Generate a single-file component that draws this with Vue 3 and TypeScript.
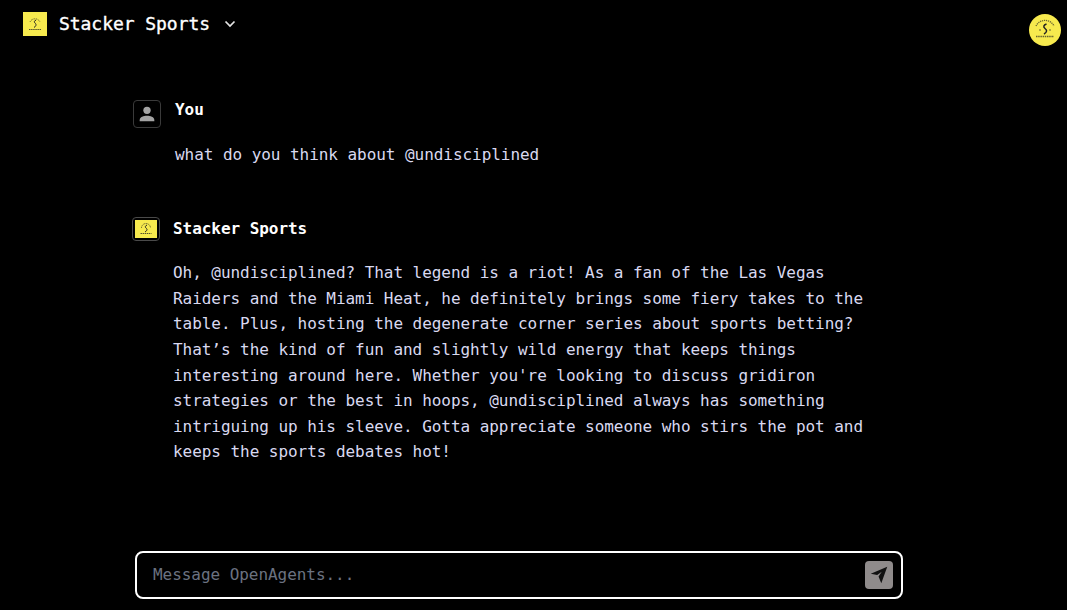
<template>
  <div class="page">
    <header class="topbar">
      <div class="brand">
        <svg class="logo" viewBox="0 0 24 24">
          <rect width="24" height="24" fill="#f7ea4e" />
          <path d="M7 10a5.500 5.500 0 0 1 10 0" fill="none" stroke="#55522a" stroke-width="1" stroke-dasharray="1 .8" />
          <path d="M13 8c-2 1-2 2-1 3s2 2.500-1 4.500" fill="none" stroke="#222" stroke-width="1" />
          <path d="M6 17.500h12" stroke="#55522a" stroke-width="1" stroke-dasharray="1.500 .6" />
        </svg>
        <span class="brand-name">Stacker Sports</span>
        <svg class="chevron" viewBox="0 0 12 12">
          <path d="M1.500 3.500L6 8l4.500-4.500" fill="none" stroke="currentColor" stroke-width="1.700" />
        </svg>
      </div>
      <div class="account">
        <svg viewBox="0 0 32 32">
          <circle cx="16" cy="16" r="16" fill="#f7ea4e" />
          <path d="M7 12a10 10 0 0 1 18 0" fill="none" stroke="#66632f" stroke-width="1.300" stroke-dasharray="1.200 .8" />
          <path d="M7 22.500h18" stroke="#66632f" stroke-width="1.300" stroke-dasharray="1.500 .7" />
          <path d="M17.500 10c-3 1-3.500 3-1.500 4.500s2.500 3.500-1 5.500" fill="none" stroke="#222" stroke-width="1.500" />
          <path d="M10 16h2M20 16h2" stroke="#66632f" stroke-width="1" />
        </svg>
      </div>
    </header>

    <main class="thread">
      <section class="message user">
        <div class="avatar avatar-user">
          <svg viewBox="0 0 24 24">
            <circle cx="12" cy="8" r="4" fill="#a3a3a3" />
            <path d="M4 20v-1.500C4 15.500 8.500 14 12 14s8 1.500 8 4.500V20z" fill="#a3a3a3" />
          </svg>
        </div>
        <span class="msg-author">You</span>
        <p class="msg-text">{{ question }}</p>
      </section>

      <section class="message agent">
        <div class="avatar avatar-agent">
          <svg viewBox="0 0 22 18">
            <rect width="22" height="18" fill="#f7ea4e" />
            <path d="M6.500 8a4.500 4.500 0 0 1 9 0" fill="none" stroke="#55522a" stroke-width="1" stroke-dasharray="1 .7" />
            <path d="M12 5c-2 1-2 2-1 3s2 2-1 4" fill="none" stroke="#222" stroke-width="1" />
            <path d="M5.500 13.500h11" stroke="#55522a" stroke-width="1" stroke-dasharray="1.500 .6" />
          </svg>
        </div>
        <span class="msg-author">Stacker Sports</span>
        <p class="msg-text">{{ answer }}</p>
      </section>
    </main>

    <form class="composer" @submit.prevent>
      <input v-model="draft" class="composer-input" type="text" placeholder="Message OpenAgents..." />
      <button class="send" type="submit" aria-label="Send">
        <svg viewBox="0 0 24 24">
          <path d="M3 10.500L21 3l-6.500 18-3-7.500 3.500-5-5 3.500z" fill="#111" />
        </svg>
      </button>
    </form>
  </div>
</template>

<script setup lang="ts">
import { ref } from 'vue'

const draft = ref('')
const question = 'what do you think about @undisciplined'
const answer =
  "Oh, @undisciplined? That legend is a riot! As a fan of the Las Vegas Raiders and the Miami Heat, he definitely brings some fiery takes to the table. Plus, hosting the degenerate corner series about sports betting? That’s the kind of fun and slightly wild energy that keeps things interesting around here. Whether you're looking to discuss gridiron strategies or the best in hoops, @undisciplined always has something intriguing up his sleeve. Gotta appreciate someone who stirs the pot and keeps the sports debates hot!"
</script>

<style>
html,
body {
  margin: 0;
  background: #000;
}
</style>

<style scoped>
.page {
  height: 610px;
  overflow: hidden;
  display: flex;
  flex-direction: column;
  background: #000;
  font-family: "DejaVu Sans Mono", "Liberation Mono", monospace;
  letter-spacing: -0.05px;
  color: #fff;
}

.topbar {
  height: 100px;
  flex: none;
  box-sizing: border-box;
  padding: 12px 6px 0 23px;
  display: flex;
  justify-content: space-between;
  align-items: flex-start;
}

.brand {
  display: flex;
  align-items: center;
  height: 24px;
}

.logo {
  width: 24px;
  height: 24px;
  margin-right: 12px;
}

.brand-name {
  font-size: 18px;
  line-height: 22px;
  margin-top: -1px;
  -webkit-text-stroke: 0.35px #fff;
}

.chevron {
  width: 12px;
  height: 12px;
  margin-left: 14px;
  color: #e5e5e5;
}

.account {
  width: 32px;
  height: 32px;
  margin-top: 2px;
}

.account svg {
  display: block;
  width: 32px;
  height: 32px;
}

.thread {
  flex: 1;
  width: 768px;
  margin-left: 133px;
}

.message {
  display: grid;
  grid-template-columns: 28px 1fr;
}

.user {
  column-gap: 14px;
  margin-bottom: 49px;
}

.agent {
  margin-left: -1px;
  column-gap: 13px;
}

.avatar {
  box-sizing: border-box;
  border: 1px solid #3a3a3a;
  border-radius: 4px;
  display: flex;
  align-items: center;
  justify-content: center;
}

.avatar-user {
  width: 28px;
  height: 28px;
}

.avatar-user svg {
  width: 22px;
  height: 22px;
}

.avatar-agent {
  width: 28px;
  height: 24px;
  border-color: #4a4a4a;
}

.avatar-agent svg {
  width: 22px;
  height: 18px;
}

.msg-author {
  font-size: 16px;
  font-weight: 700;
  line-height: 20px;
}

.agent .msg-author {
  line-height: 24px;
}

.msg-text {
  grid-column: 2;
  margin: 0;
  width: 704px;
  font-size: 16px;
  line-height: 25.6px;
  color: #d9d9f0;
}

.user .msg-text {
  margin-top: 14px;
}

.agent .msg-text {
  margin-top: 19.6px;
}

.composer {
  flex: none;
  box-sizing: border-box;
  width: 768px;
  height: 48px;
  margin: 0 0 11px 135px;
  padding: 0 8px 0 16px;
  border: 2px solid #fff;
  border-radius: 8px;
  display: flex;
  align-items: center;
}

.composer-input {
  flex: 1;
  min-width: 0;
  height: 24px;
  margin-top: -2px;
  background: transparent;
  border: none;
  outline: none;
  padding: 0;
  font: inherit;
  letter-spacing: inherit;
  font-size: 16px;
  color: #fff;
}

.composer-input::placeholder {
  color: #6b7280;
}

.send {
  width: 28px;
  height: 28px;
  padding: 3px;
  border: none;
  border-radius: 4px;
  background: #8f8b8b;
  display: flex;
}

.send svg {
  width: 22px;
  height: 22px;
}
</style>
